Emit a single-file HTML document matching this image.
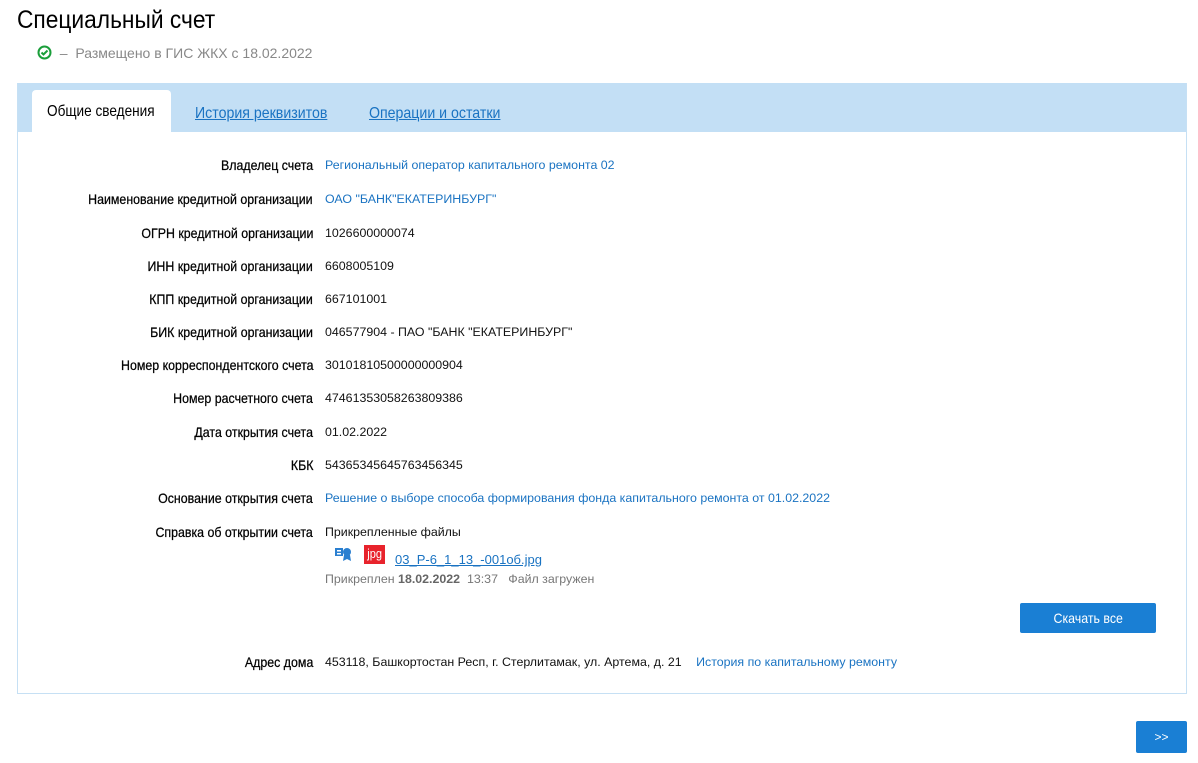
<!DOCTYPE html>
<html><head><meta charset="utf-8"><style>
body{margin:0;background:#fff;font-family:"Liberation Sans",Arial,sans-serif;width:1198px;height:763px;position:relative;overflow:hidden}
.n{display:inline-block;transform:scaleX(0.885);transform-origin:left center;white-space:nowrap}
h1{position:absolute;left:17px;top:6px;margin:0;font-size:25px;font-weight:normal;color:#000}
.st{position:absolute;left:37px;top:45px;font-size:14px;color:#888}
.panel{position:absolute;left:17px;top:83px;width:1168px;height:610px;border:1px solid #c6e0f4;border-top:none}
.bar{position:absolute;left:0;top:0;right:0;height:49px;background:#c3dff5}
.tab{position:absolute;top:22px;font-size:16px;color:#1a73c2}
.tab .n{text-decoration:underline}
.act{position:absolute;left:14px;top:7px;width:139px;height:42px;background:#fff;border-radius:4px 4px 0 0;font-size:16px;color:#000;line-height:43px}
.row{position:absolute;left:0;width:1168px;font-size:12.4px;height:16px}
.lb{position:absolute;right:873px;font-size:14px;color:#000;white-space:nowrap;top:-1px;-webkit-text-stroke:0.25px #000}
.lb .n{transform-origin:right center}
.v{position:absolute;left:307px;color:#111;white-space:nowrap}
.l{color:#1a73c2}
.btn{position:absolute;background:#1a7fd4;color:#fff;border-radius:2px;text-align:center;font-size:14px}
</style></head><body>
<h1><span class="n" style="transform:scaleX(0.91)">Специальный счет</span></h1>
<div class="st"><svg width="15" height="15" viewBox="0 0 15 15" style="vertical-align:-2px"><circle cx="7.5" cy="7.5" r="6" fill="none" stroke="#1a9e3a" stroke-width="2"/><path d="M4.5 7.5l2 2 4-4" fill="none" stroke="#1a9e3a" stroke-width="2"/></svg>&nbsp; –&nbsp; Размещено в ГИС ЖКХ с 18.02.2022</div>
<div class="panel">
<div class="bar">
<div class="act"><span class="n" style="transform:scaleX(0.85);margin-left:15px">Общие сведения</span></div>
<div class="tab" style="left:177px"><span class="n">История реквизитов</span></div>
<div class="tab" style="left:351px"><span class="n">Операции и остатки</span></div>
</div>
<div class="row" style="top:75px"><span class="lb"><span class="n">Владелец счета</span></span><span class="v l">Региональный оператор капитального ремонта 02</span></div>
<div class="row" style="top:109px"><span class="lb"><span class="n">Наименование кредитной организации</span></span><span class="v l">ОАО "БАНК"ЕКАТЕРИНБУРГ"</span></div>
<div class="row" style="top:143px"><span class="lb"><span class="n">ОГРН кредитной организации</span></span><span class="v">1026600000074</span></div>
<div class="row" style="top:176px"><span class="lb"><span class="n">ИНН кредитной организации</span></span><span class="v">6608005109</span></div>
<div class="row" style="top:209px"><span class="lb"><span class="n">КПП кредитной организации</span></span><span class="v">667101001</span></div>
<div class="row" style="top:242px"><span class="lb"><span class="n">БИК кредитной организации</span></span><span class="v">046577904 - ПАО "БАНК "ЕКАТЕРИНБУРГ"</span></div>
<div class="row" style="top:275px"><span class="lb"><span class="n">Номер корреспондентского счета</span></span><span class="v">30101810500000000904</span></div>
<div class="row" style="top:308px"><span class="lb"><span class="n">Номер расчетного счета</span></span><span class="v">47461353058263809386</span></div>
<div class="row" style="top:342px"><span class="lb"><span class="n">Дата открытия счета</span></span><span class="v">01.02.2022</span></div>
<div class="row" style="top:375px"><span class="lb"><span class="n">КБК</span></span><span class="v">54365345645763456345</span></div>
<div class="row" style="top:408px"><span class="lb"><span class="n">Основание открытия счета</span></span><span class="v l">Решение о выборе способа формирования фонда капитального ремонта от 01.02.2022</span></div>
<div class="row" style="top:442px"><span class="lb"><span class="n">Справка об открытии счета</span></span><span class="v">Прикрепленные файлы</span></div>
<div style="position:absolute;left:316px;top:463px;width:18px;height:16px"><svg width="18" height="16"><rect x="1" y="2" width="8" height="8" fill="#2a7fd0"/><rect x="3" y="4" width="4" height="1.5" fill="#fff"/><rect x="3" y="7" width="4" height="1.5" fill="#fff"/><circle cx="13" cy="6" r="4" fill="#2a7fd0"/><path d="M10 9l-1 6 4-2 4 2-1-6z" fill="#2a7fd0"/></svg></div>
<div style="position:absolute;left:346px;top:462px;width:21px;height:19px;background:#e8232c;color:#fff;font-size:13px;text-align:center;line-height:17px"><span class="n" style="transform:scaleX(0.85);transform-origin:center">jpg</span></div>
<div style="position:absolute;left:377px;top:469px;font-size:13px;color:#1a73c2;text-decoration:underline">03_Р-6_1_13_-001об.jpg</div>
<div style="position:absolute;left:307px;top:489px;font-size:12.4px;color:#777">Прикреплен <b style="color:#666">18.02.2022</b>&nbsp; 13:37&nbsp;&nbsp; Файл загружен</div>
<div class="btn" style="left:1002px;top:520px;width:136px;height:30px;line-height:30px"><span class="n" style="transform-origin:center">Скачать все</span></div>
<div class="row" style="top:572px"><span class="lb"><span class="n">Адрес дома</span></span><span class="v">453118, Башкортостан Респ, г. Стерлитамак, ул. Артема, д. 21 <span class="l" style="margin-left:11px">История по капитальному ремонту</span></span></div>
</div>
<div class="btn" style="left:1136px;top:721px;width:51px;height:32px;line-height:32px;font-size:12px">&gt;&gt;</div>
</body></html>
